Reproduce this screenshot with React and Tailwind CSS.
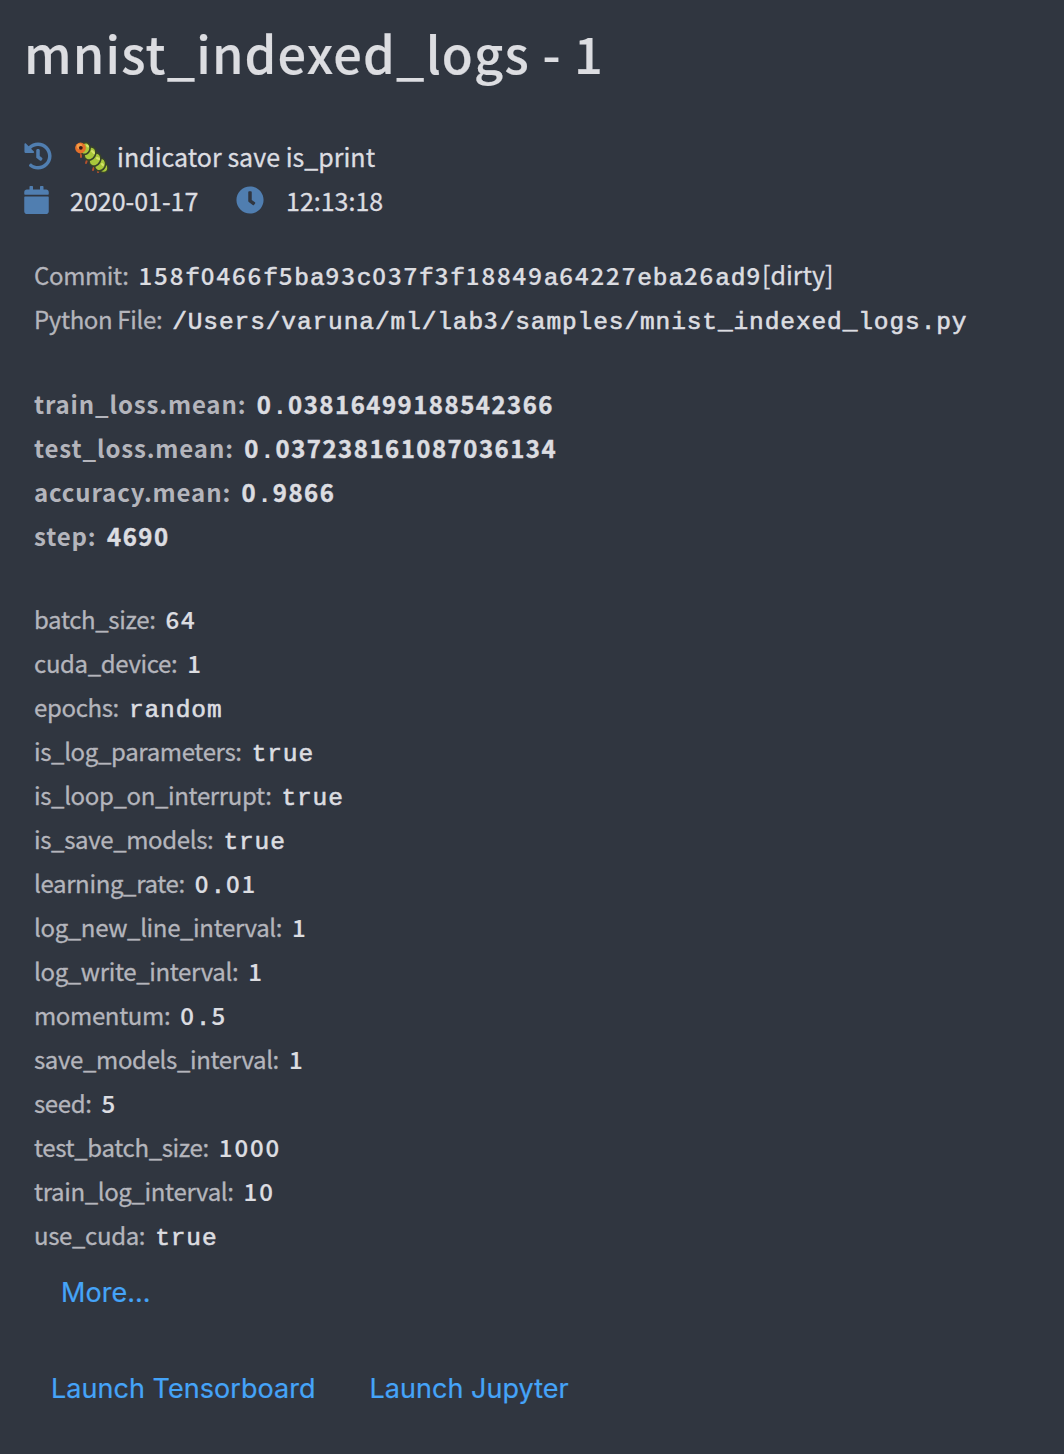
import React from "react";
import { FaHistory, FaCalendar, FaClock } from "react-icons/fa";

const sans = "font-['Noto_Sans_CJK_SC',sans-serif]";

const metrics = [
  ["train_loss.mean", "0.03816499188542366"],
  ["test_loss.mean", "0.037238161087036134"],
  ["accuracy.mean", "0.9866"],
  ["step", "4690"],
];

const configs = [
  ["batch_size", "64"],
  ["cuda_device", "1"],
  ["epochs", "random"],
  ["is_log_parameters", "true"],
  ["is_loop_on_interrupt", "true"],
  ["is_save_models", "true"],
  ["learning_rate", "0.01"],
  ["log_new_line_interval", "1"],
  ["log_write_interval", "1"],
  ["momentum", "0.5"],
  ["save_models_interval", "1"],
  ["seed", "5"],
  ["test_batch_size", "1000"],
  ["train_log_interval", "10"],
  ["use_cuda", "true"],
];

function Code({ children, bold }) {
  return (
    <span className={"font-['Liberation_Mono',monospace] text-[24.5px] tracking-[0.89px] text-[#dcdde1] " + (bold ? "font-bold" : "[-webkit-text-stroke:0.6px_#dcdde1]")}>
      {children.split(/(\d+)/).map((part, i) =>
        /^\d/.test(part) ? (
          <span key={i} className={"font-['Noto_Sans_CJK_SC',sans-serif] text-[24px] " + (bold ? "tracking-[1.48px] font-bold [-webkit-text-stroke:0.4px_#dcdde1]" : "tracking-[1.9px] font-medium [-webkit-text-stroke:0.2px_#dcdde1]")}>
            {part}
          </span>
        ) : (
          part
        )
      )}
    </span>
  );
}

function Row({ label, value, bold, children }) {
  return (
    <div className={"flex h-11 items-baseline whitespace-pre " + (bold ? "leading-[43px]" : "leading-[42px]")}>
      <span className={"text-[24px] text-[#b4b5bc] " + (bold ? "mr-[10.5px] font-bold tracking-[0.87px]" : "mr-2.5 tracking-[-0.36px] [-webkit-text-stroke:0.3px_#b4b5bc]")}>{label}:</span>
      <Code bold={bold}>{value}</Code>
      {children}
    </div>
  );
}

function Caterpillar() {
  return (
    <svg className="h-9 w-9" viewBox="0 0 36 36">
      <g stroke="#b4502c" strokeWidth="2" strokeLinecap="round">
        <path d="M7 14v3M13 20l-1 3M20 27l-1 3M25 30l-1 2" />
      </g>
      <g fill="#a9c83b" stroke="#38432a" strokeWidth="1.6">
        <ellipse cx="29.5" cy="28" rx="4.5" ry="4.5" />
        <ellipse cx="26" cy="24.5" rx="5.5" ry="6.5" transform="rotate(25 26 24.5)" />
        <ellipse cx="21" cy="19.5" rx="5.5" ry="7" transform="rotate(30 21 19.5)" />
        <ellipse cx="16" cy="13.5" rx="5.5" ry="7" transform="rotate(30 16 13.5)" />
        <ellipse cx="11" cy="8.5" rx="5" ry="6" transform="rotate(20 11 8.5)" />
      </g>
      <g stroke="#d7e46b" strokeWidth="2" strokeLinecap="round">
        <path d="M13 5.5l1 1M18 11l2 2M23 18l2 1M28 24l1 1" />
      </g>
      <circle cx="6.5" cy="8" r="5.4" fill="#e4702b" />
      <circle cx="5.5" cy="6.2" r="2.8" fill="#f39a45" />
      <circle cx="6.8" cy="7.8" r="1.9" fill="#3a1b16" />
    </svg>
  );
}

export default function App() {
  return (
    <main className={"h-[1454px] w-[1064px] overflow-hidden bg-[#303640] text-[#dcdde1] " + sans}>
      <h1 className="h-[134px] pt-3 pl-6 text-[50.5px] leading-[80px] font-medium tracking-[1.17px] whitespace-nowrap [-webkit-text-stroke:0.2px_#dcdde1]">mnist_indexed_logs - 1</h1>

      <section className="h-[120px] pl-6 text-[25px] leading-[44px] whitespace-nowrap [-webkit-text-stroke:0.3px_#dcdde1]">
        <div className="flex h-11 items-center">
          <FaHistory className="size-7 text-[#507eb0]" />
          <span className="mt-1 ml-[22px]"><Caterpillar /></span>
          <span className="ml-[7px] tracking-[0.02px]">indicator save is_print</span>
        </div>
        <div className="flex h-11 items-center">
          <FaCalendar className="h-7 w-[25px] text-[#507eb0]" />
          <span className="ml-[21px] w-[166px]">2020-01-17</span>
          <FaClock className="size-7 text-[#507eb0]" />
          <span className="ml-[22px]">12:13:18</span>
        </div>
      </section>

      <section className="pl-[34px]">
        <Row label="Commit" value="158f0466f5ba93c037f3f18849a64227eba26ad9">
          <span className="text-[25px] leading-[40px] [-webkit-text-stroke:0.3px_#dcdde1]">[dirty]</span>
        </Row>
        <Row label="Python File" value="/Users/varuna/ml/lab3/samples/mnist_indexed_logs.py" />
      </section>

      <section className="mt-10 pl-[34px]">
        {metrics.map(([label, value]) => <Row key={label} label={label} value={value} bold />)}
      </section>

      <section className="mt-10 pl-[34px]">
        {configs.map(([label, value]) => <Row key={label} label={label} value={value} />)}
      </section>

      <div className="font-[Inter,sans-serif] text-[27px] leading-[44px] tracking-[0.04px] text-[#45a4f8] [-webkit-text-stroke:0.2px_#45a4f8]">
        <button className="mt-[13px] ml-[61px] block h-11">More...</button>
        <div className="mt-[52px] flex gap-[54px] pl-[51px]">
          <button>Launch Tensorboard</button>
          <button>Launch Jupyter</button>
        </div>
      </div>
    </main>
  );
}
